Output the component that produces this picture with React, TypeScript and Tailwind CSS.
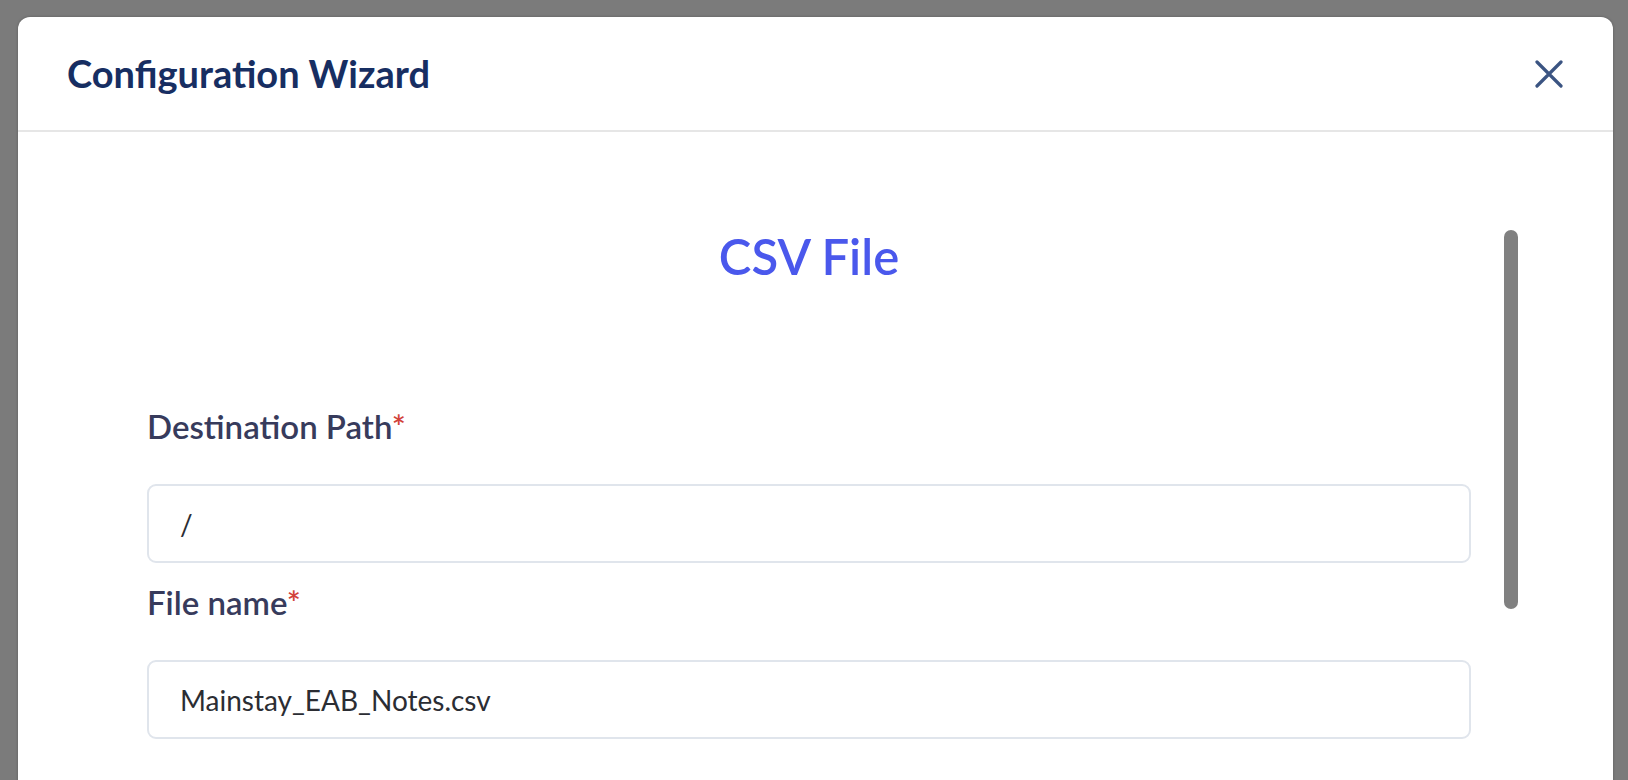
import React from 'react';

const labelFont = { fontFamily: 'Lato, "Noto Sans", sans-serif' };

function Field({ label, value }: { label: string; value: string }) {
  return (
    <div>
      <label className="block text-[33px] leading-[33px] font-semibold text-[#373b5c]">
        {label}
        <span className="text-[#d2423a]">*</span>
      </label>
      <input
        readOnly
        value={value}
        className="mt-[41px] block w-full h-[79px] rounded-[9px] border-2 border-[#e0e5ec] bg-white pl-[31px] text-[28px] font-normal text-[#2b2d33] outline-none"
        style={labelFont}
      />
    </div>
  );
}

export default function App() {
  return (
    <div className="relative h-[780px] w-full overflow-hidden bg-[#7b7b7b]" style={labelFont}>
      {/* modal */}
      <div className="ml-[18px] mt-[17px] w-[1595px] h-[800px] rounded-t-[12px] bg-white shadow-[0_0_3px_rgba(0,0,0,0.25)]">
        <div className="flex h-[115px] items-center justify-between border-b-2 border-[#e6e6e6] pl-[49px] pr-[50px]">
          <h2 className="text-[38px] font-bold text-[#172e62]" style={{ fontFamily: 'Lato, sans-serif' }}>
            Configuration Wizard
          </h2>
          <button className="flex h-[28px] w-[28px] items-center justify-center text-[#3b5482]">
            <svg width="28" height="28" viewBox="0 0 28 28" fill="none" stroke="currentColor" strokeWidth="3.2" strokeLinecap="round">
              <path d="M2 2 L26 26 M26 2 L2 26" />
            </svg>
          </button>
        </div>

        <div className="flex">
          <div className="ml-[129px] w-[1324px]">
            <h1 className="mt-[100px] text-center text-[49px] leading-[48px] font-semibold text-[#4a58ec]">CSV File</h1>
            <div className="mt-[130px]">
              <Field label="Destination Path" value="/" />
            </div>
            <div className="mt-[23px]">
              <Field label="File name" value="Mainstay_EAB_Notes.csv" />
            </div>
          </div>
          {/* scrollbar thumb */}
          <div className="ml-[33px] mt-[98px] h-[379px] w-[14px] rounded-full bg-[#808080]" />
        </div>
      </div>
    </div>
  );
}
